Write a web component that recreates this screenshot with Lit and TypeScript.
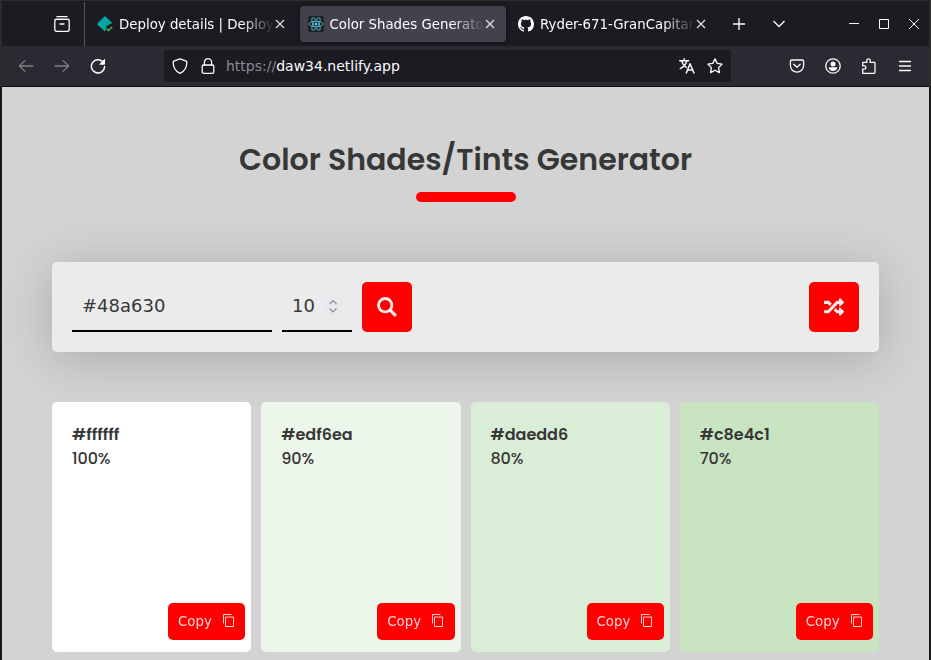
import { LitElement, html, css, svg } from "lit";
import { customElement, property } from "lit/decorators.js";

const closeIcon = html`<svg class="close" width="10" height="10" viewBox="0 0 10 10" fill="none" stroke="#e4e4ea" stroke-width="1.1"><path d="M1 1l8 8M9 1L1 9"/></svg>`;

const deployIcon = html`<svg width="16" height="16" viewBox="0 0 16 16"><path d="M7.1.7a1.3 1.3 0 0 1 1.8 0l6.4 6.4-5.8 2.8-1 4.9-.9.5L.7 8.9a1.3 1.3 0 0 1 0-1.8z" fill="#05a5a1"/><path d="M9.6 12.4l2 2.2 3.6-3.8" fill="none" stroke="#3fae5a" stroke-width="1.5"/></svg>`;

const reactIcon = html`<svg width="16" height="16" viewBox="0 0 16 16"><rect width="16" height="16" rx="2" fill="#20232a"/><g fill="none" stroke="#61dafb" stroke-width=".8" opacity=".85"><ellipse cx="8" cy="8" rx="7" ry="2.7"/><ellipse cx="8" cy="8" rx="7" ry="2.7" transform="rotate(60 8 8)"/><ellipse cx="8" cy="8" rx="7" ry="2.7" transform="rotate(120 8 8)"/></g><circle cx="8" cy="8" r="1.3" fill="#61dafb"/></svg>`;

const githubIcon = html`<svg width="16" height="16" viewBox="0 0 16 16" fill="#fff"><path d="M8 0C3.58 0 0 3.58 0 8c0 3.54 2.29 6.53 5.47 7.59.4.07.55-.17.55-.38 0-.19-.01-.82-.01-1.49-2.01.37-2.53-.49-2.69-.94-.09-.23-.48-.94-.82-1.13-.28-.15-.68-.52-.01-.53.63-.01 1.08.58 1.23.82.72 1.21 1.87.87 2.33.66.07-.52.28-.87.51-1.07-1.78-.2-3.64-.89-3.64-3.95 0-.87.31-1.59.82-2.15-.08-.2-.36-1.02.08-2.12 0 0 .67-.21 2.2.82.64-.18 1.32-.27 2-.27s1.36.09 2 .27c1.53-1.04 2.2-.82 2.2-.82.44 1.1.16 1.92.08 2.12.51.56.82 1.27.82 2.15 0 3.07-1.87 3.75-3.65 3.95.29.25.54.73.54 1.48 0 1.07-.01 1.93-.01 2.2 0 .21.15.46.55.38A8.01 8.01 0 0 0 16 8c0-4.42-3.58-8-8-8z"/></svg>`;

const stroke16 = (body: unknown, cls = "") => html`<svg class=${cls} width="16" height="16" viewBox="0 0 16 16" fill="none" stroke="#fbfbfe" stroke-width="1.3" stroke-linecap="round" stroke-linejoin="round">${body}</svg>`;

@customElement("browser-chrome")
class BrowserChrome extends LitElement {
  static styles = css`
    :host { display: block; border: solid #2c2c2e; border-width: 0 2px; font: 14px "DejaVu Sans", sans-serif; color: #fbfbfe; }
    svg { display: block; flex: none; }
    .tabs { display: flex; align-items: center; height: 45px; background: #1c1b22; }
    .view { width: 82px; height: 45px; padding-left: 52px; box-sizing: border-box; display: flex; align-items: center; }
    .rule { width: 1px; height: 44px; align-self: flex-end; background: #55545c; }
    .tab { display: flex; align-items: center; box-sizing: border-box; width: 206px; height: 36px; margin-left: 4px; padding: 0 10px 0 8px; border-radius: 4px; font-size: 13.333px; }
    .tab.active { margin-left: 5px; padding-right: 11px; background: #42414d; box-shadow: 0 0 4px rgba(0, 0, 0, .4); }
    .name { flex: 1; margin-left: 6px; padding-top: 1px; white-space: nowrap; overflow: hidden; line-height: 21px; -webkit-mask-image: linear-gradient(to left, transparent, #000 32px); }
    .active .name { margin-left: 5.5px; }
    .close { margin-left: 1px; }
    .plus { margin-left: 17px; }
    .down { margin-left: 28px; }
    .window { display: flex; align-items: center; gap: 20px; margin-left: auto; margin-right: 10px; }
    .bar { display: flex; align-items: center; height: 40px; background: #2b2a33; border-bottom: 1px solid #0c0c0d; padding: 0 16px; }
    .nav { display: flex; gap: 20px; }
    .dim { opacity: .4; }
    .url { display: flex; align-items: center; box-sizing: border-box; width: 567px; height: 32px; margin-left: 58px; padding: 0 8px; background: #1c1b22; border-radius: 4px; }
    .url .lock { margin-left: 12px; }
    .address { flex: 1; margin-left: 10px; }
    .scheme { color: #8b8a91; }
    .url .star { margin-left: 12px; }
    .tools { display: flex; gap: 20px; margin-left: auto; }
  `;

  render() {
    return html`
      <div class="tabs">
        <div class="view">${stroke16(svg`<path d="M3 .7h10M1.2 3.4h13.6"/><rect x=".8" y="3.4" width="14.4" height="12" rx="1.8"/><path d="M6 8h4"/>`)}</div>
        <div class="rule"></div>
        <div class="tab">${deployIcon}<span class="name">Deploy details | Deploy</span>${closeIcon}</div>
        <div class="tab active">${reactIcon}<span class="name">Color Shades Generator</span>${closeIcon}</div>
        <div class="tab">${githubIcon}<span class="name">Ryder-671-GranCapitan</span>${closeIcon}</div>
        <svg class="plus" width="12" height="12" viewBox="0 0 12 12" stroke="#fbfbfe" stroke-width="1.3"><path d="M6 0v12M0 6h12"/></svg>
        <svg class="down" width="12" height="8" viewBox="0 0 12 8" fill="none" stroke="#fbfbfe" stroke-width="1.3"><path d="M.5 1L6 6.5 11.5 1"/></svg>
        <div class="window">
          <svg width="10" height="10" stroke="#fbfbfe"><path d="M0 4.5h10"/></svg>
          <svg width="10" height="10" fill="none" stroke="#fbfbfe"><path d="M.5.5h9v9h-9z"/></svg>
          <svg width="10" height="10" stroke="#fbfbfe" stroke-width="1"><path d="M0 0l10 10M10 0L0 10"/></svg>
        </div>
      </div>
      <div class="bar">
        <div class="nav">
          ${stroke16(svg`<path d="M15 8H1.6M7 2.6L1.4 8 7 13.4"/>`, "dim")}
          ${stroke16(svg`<path d="M1 8h13.4M9 2.6L14.6 8 9 13.4"/>`, "dim")}
          ${stroke16(svg`<path d="M13.8 5.2A6.6 6.6 0 1 0 14.6 8.5" stroke-width="1.4"/><path d="M14.5 1.8v4.4h-4.4z" fill="#fbfbfe" stroke-width="1"/>`)}
        </div>
        <div class="url">
          ${stroke16(svg`<path d="M8 .8l6.2 2.3q.6.3.6.9c0 5-1.9 9.2-6.8 11.3C3.1 13.2 1.2 9 1.2 4q0-.6.6-.9z"/>`)}
          ${stroke16(svg`<rect x="2.2" y="7" width="11.6" height="8.3" rx="1.6"/><path d="M4.4 7V4.3a3.6 3.6 0 0 1 7.2 0V7"/>`, "lock")}
          <span class="address"><span class="scheme">https://</span>daw34.netlify.app</span>
          ${stroke16(svg`<path d="M.7 2.8h9M5.2.8v2M7.8 3C7 6.2 4.6 8.9 1.2 10.6M2.6 3C3.6 6.2 5 8 7.2 9.4" stroke-width="1.4"/><path d="M7.3 15l3.7-9.3L15 15M8.8 12h4.9" stroke-width="1.5"/>`)}
          ${stroke16(svg`<path d="M8 .9l2.2 4.5 4.9.7-3.5 3.5.8 5-4.4-2.4-4.4 2.4.8-5L.9 6.1l4.9-.7z"/>`, "star")}
        </div>
        <div class="tools">
          ${stroke16(svg`<path d="M2.8 2h10.4q1.4 0 1.4 1.4v4.1a6.6 6.6 0 0 1-13.2 0V3.4Q1.400 2 2.800 2z"/><path d="M4.800 6.300L8 9.300l3.200-3"/>`)}
          ${stroke16(svg`<circle cx="8" cy="8" r="7.2"/><circle cx="8" cy="5.9" r="2.5" fill="#fbfbfe" stroke="none"/><path d="M3.6 10q0-.8.8-.8h7.2q.8 0 .8.8c-.7 1.9-2.400 3-4.400 3s-3.700-1.100-4.400-3z" fill="#fbfbfe" stroke="none"/>`)}
          ${stroke16(svg`<path d="M1.700 15.300V11.200h1.500a1.500 1.500 0 0 0 0-3.400H1.700V5.200q0-.8.8-.8h3.300V2.500a1.700 1.700 0 0 1 3.400 0v1.900h4q.8 0 .8.800v9.300q0 .8-.8.8z"/>`)}
          ${stroke16(svg`<path d="M2.500 3.500h11M2.500 8h11M2.500 12.500h11"/>`)}
        </div>
      </div>`;
  }
}

@customElement("shade-card")
class ShadeCard extends LitElement {
  @property() hex = "";
  @property({ type: Number }) percent = 0;

  static styles = css`
    :host { display: block; }
    .card { box-sizing: border-box; height: 250px; padding: 21px 6px 12px 20px; border-radius: 5px; display: flex; flex-direction: column; font: 500 16px/24px Poppins, Inter, sans-serif; color: #373737; }
    .hex { font-weight: 600; }
    .percent { letter-spacing: -.1px; }
    button { margin: auto 0 0 auto; width: 77.2px; height: 37px; padding: 0 9.5px 0 10px; border: 0; border-radius: 5px; background: #f00; color: #fff; display: flex; align-items: center; justify-content: space-between; font: 13.333px "DejaVu Sans", sans-serif; }
    .label, svg { opacity: .83; }
    svg { margin-bottom: 2px; }
  `;

  render() {
    return html`<article class="card" style="background:${this.hex}">
      <span class="hex">${this.hex}</span><span class="percent">${this.percent}%</span>
      <button><span class="label">Copy</span><svg width="14" height="14" viewBox="0 0 14 14" fill="none" stroke="#fff"><path d="M1.500 9.500v-9h8"/><path d="M3.500 3h8v9.500h-8z"/></svg></button>
    </article>`;
  }
}

@customElement("app-root")
class AppRoot extends LitElement {
  static styles = css`
    :host { display: block; box-sizing: border-box; height: 660px; overflow: hidden; border-top: 1px solid #2c2c2e; background: #d3d3d3; }
    .page { box-sizing: border-box; height: 573px; border: solid #19191b; border-width: 0 2px; padding: 50px 50px 0; }
    header { height: 125px; display: flex; flex-direction: column; align-items: center; }
    h1 { margin: 0; font: 600 30px/45px Poppins, Inter, sans-serif; color: #373737; white-space: nowrap; }
    .underline { width: 100px; height: 10px; margin-top: 10px; border-radius: 5px; background: #f00; }
    form { display: flex; gap: 10px; box-sizing: border-box; height: 90px; padding: 20px; border-radius: 5px; background: #ebebeb; box-shadow: 0 7px 50px rgba(0, 0, 0, .2); }
    .field { box-sizing: border-box; height: 50px; padding: 0 10px 2px; border-bottom: 2px solid #000; display: flex; align-items: center; font: 18px "DejaVu Sans", sans-serif; color: #373737; }
    .color { width: 200px; }
    .count { width: 70px; justify-content: space-between; }
    .spin { width: 18px; height: 18px; margin-top: 2px; background: #e9e9ed; }
    .action { width: 50px; height: 50px; padding: 0; border: 0; border-radius: 5px; background: #f00; display: grid; place-items: center; }
    .random { margin-left: auto; }
    .shades { display: grid; grid-template-columns: repeat(4, 1fr); gap: 10px; margin-top: 50px; }
  `;

  private shades = [
    { hex: "#ffffff", percent: 100 },
    { hex: "#edf6ea", percent: 90 },
    { hex: "#daedd6", percent: 80 },
    { hex: "#c8e4c1", percent: 70 },
  ];

  render() {
    return html`
      <browser-chrome></browser-chrome>
      <main class="page">
        <header><h1>Color Shades/Tints Generator</h1><div class="underline"></div></header>
        <form>
          <div class="field color">#48a630</div>
          <div class="field count">10<svg class="spin" viewBox="0 0 18 18" fill="none" stroke="#8f8f9d" stroke-width="1.3"><path d="M5.500 7L9 3.600 12.500 7M5.500 11.500L9 14.900l3.500-3.400"/></svg></div>
          <button class="action" type="button"><svg width="20" height="20" viewBox="0 0 20 20" fill="none" stroke="#fff" stroke-opacity=".92" stroke-width="2.8"><circle cx="8.2" cy="8.2" r="6.7"/><path d="M12.900 12.900l6 6" stroke-width="3.2"/></svg></button>
          <button class="action random" type="button"><svg width="20" height="20" viewBox="0 0 512 512" fill="#fff" fill-opacity=".92"><path d="M504.971 359.029c9.373 9.373 9.373 24.569 0 33.941l-80 79.984c-15.010 15.010-40.971 4.490-40.971-16.971V416h-58.785a12.004 12.004 0 0 1-8.773-3.812l-70.556-75.596 53.333-57.143L352 336h32v-39.981c0-21.438 25.943-31.998 40.971-16.971l80 79.981zM12 176h84l52.781 56.551 53.333-57.143-70.556-75.596A11.999 11.999 0 0 0 122.785 96H12c-6.627 0-12 5.373-12 12v56c0 6.627 5.373 12 12 12zm372 0v39.984c0 21.460 25.961 31.980 40.971 16.971l80-79.984c9.373-9.373 9.373-24.569 0-33.941l-80-79.981C409.943 24.021 384 34.582 384 56.019V96h-58.785a12.004 12.004 0 0 0-8.773 3.812L96 336H12c-6.627 0-12 5.373-12 12v56c0 6.627 5.373 12 12 12h110.785c3.326 0 6.503-1.381 8.773-3.812L352 176h32z"/></svg></button>
        </form>
        <section class="shades">${this.shades.map((s) => html`<shade-card .hex=${s.hex} .percent=${s.percent}></shade-card>`)}</section>
      </main>`;
  }
}
